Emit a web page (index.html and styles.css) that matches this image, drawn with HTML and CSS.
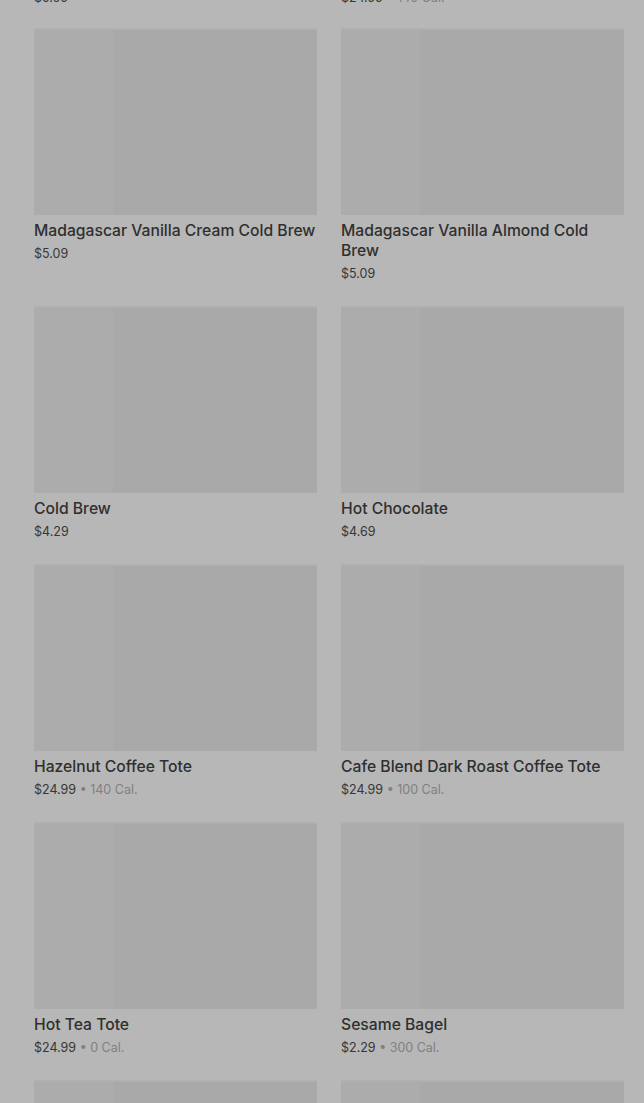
FILE: index.html
```html
<!DOCTYPE html>
<html>
  <head>
    <link rel="stylesheet" href="styles.css">
  </head>
  <body>
    <div class="menu">
      <div class="grid">
        <div class="card card-cut">
          <div class="price">$5.09</div>
        </div>
        <div class="card card-cut">
          <div class="price">$24.99 <span class="cal">&bull; 140 Cal.</span></div>
        </div>

        <div class="card">
          <div class="thumb"></div>
          <div class="name">Madagascar Vanilla Cream Cold Brew</div>
          <div class="price">$5.09</div>
        </div>
        <div class="card">
          <div class="thumb"></div>
          <div class="name">Madagascar Vanilla Almond Cold Brew</div>
          <div class="price">$5.09</div>
        </div>

        <div class="card">
          <div class="thumb"></div>
          <div class="name">Cold Brew</div>
          <div class="price">$4.29</div>
        </div>
        <div class="card">
          <div class="thumb"></div>
          <div class="name">Hot Chocolate</div>
          <div class="price">$4.69</div>
        </div>

        <div class="card">
          <div class="thumb"></div>
          <div class="name">Hazelnut Coffee Tote</div>
          <div class="price">$24.99 <span class="cal">&bull; 140 Cal.</span></div>
        </div>
        <div class="card">
          <div class="thumb"></div>
          <div class="name">Cafe Blend Dark Roast Coffee Tote</div>
          <div class="price">$24.99 <span class="cal">&bull; 100 Cal.</span></div>
        </div>

        <div class="card">
          <div class="thumb"></div>
          <div class="name">Hot Tea Tote</div>
          <div class="price">$24.99 <span class="cal">&bull; 0 Cal.</span></div>
        </div>
        <div class="card">
          <div class="thumb"></div>
          <div class="name">Sesame Bagel</div>
          <div class="price">$2.29 <span class="cal">&bull; 300 Cal.</span></div>
        </div>

        <div class="card">
          <div class="thumb"></div>
        </div>
        <div class="card">
          <div class="thumb"></div>
        </div>
      </div>
    </div>
  </body>
</html>
```

FILE: styles.css
```css
body {
  margin: 0;
  padding: 0;
  background-color: #b7b7b7;
  font-family: Inter, "Noto Sans", sans-serif;
  overflow: hidden;
  height: 1103px;
}

.menu {
  padding: 0 20px 0 34px;
}

.grid {
  display: grid;
  grid-template-columns: 283px 283px;
  column-gap: 24px;
  row-gap: 22px;
  align-items: start;
}

.card-cut {
  margin-top: -15px;
  height: 21px;
}

.thumb {
  height: 187px;
  background: linear-gradient(90deg, #acacac 0, #acacac 28%, #a9a9a9 28%, #a9a9a9 100%);
  border-top: 2px solid #b0b0b0;
  box-sizing: border-box;
}

.name {
  margin-top: 6px;
  font-size: 15.7px;
  font-weight: 500;
  line-height: 20px;
  color: #2f2f2f;
}

.price {
  margin-top: 3px;
  font-size: 12.5px;
  line-height: 20px;
  color: #363636;
}

.cal {
  color: #808080;
}
```
